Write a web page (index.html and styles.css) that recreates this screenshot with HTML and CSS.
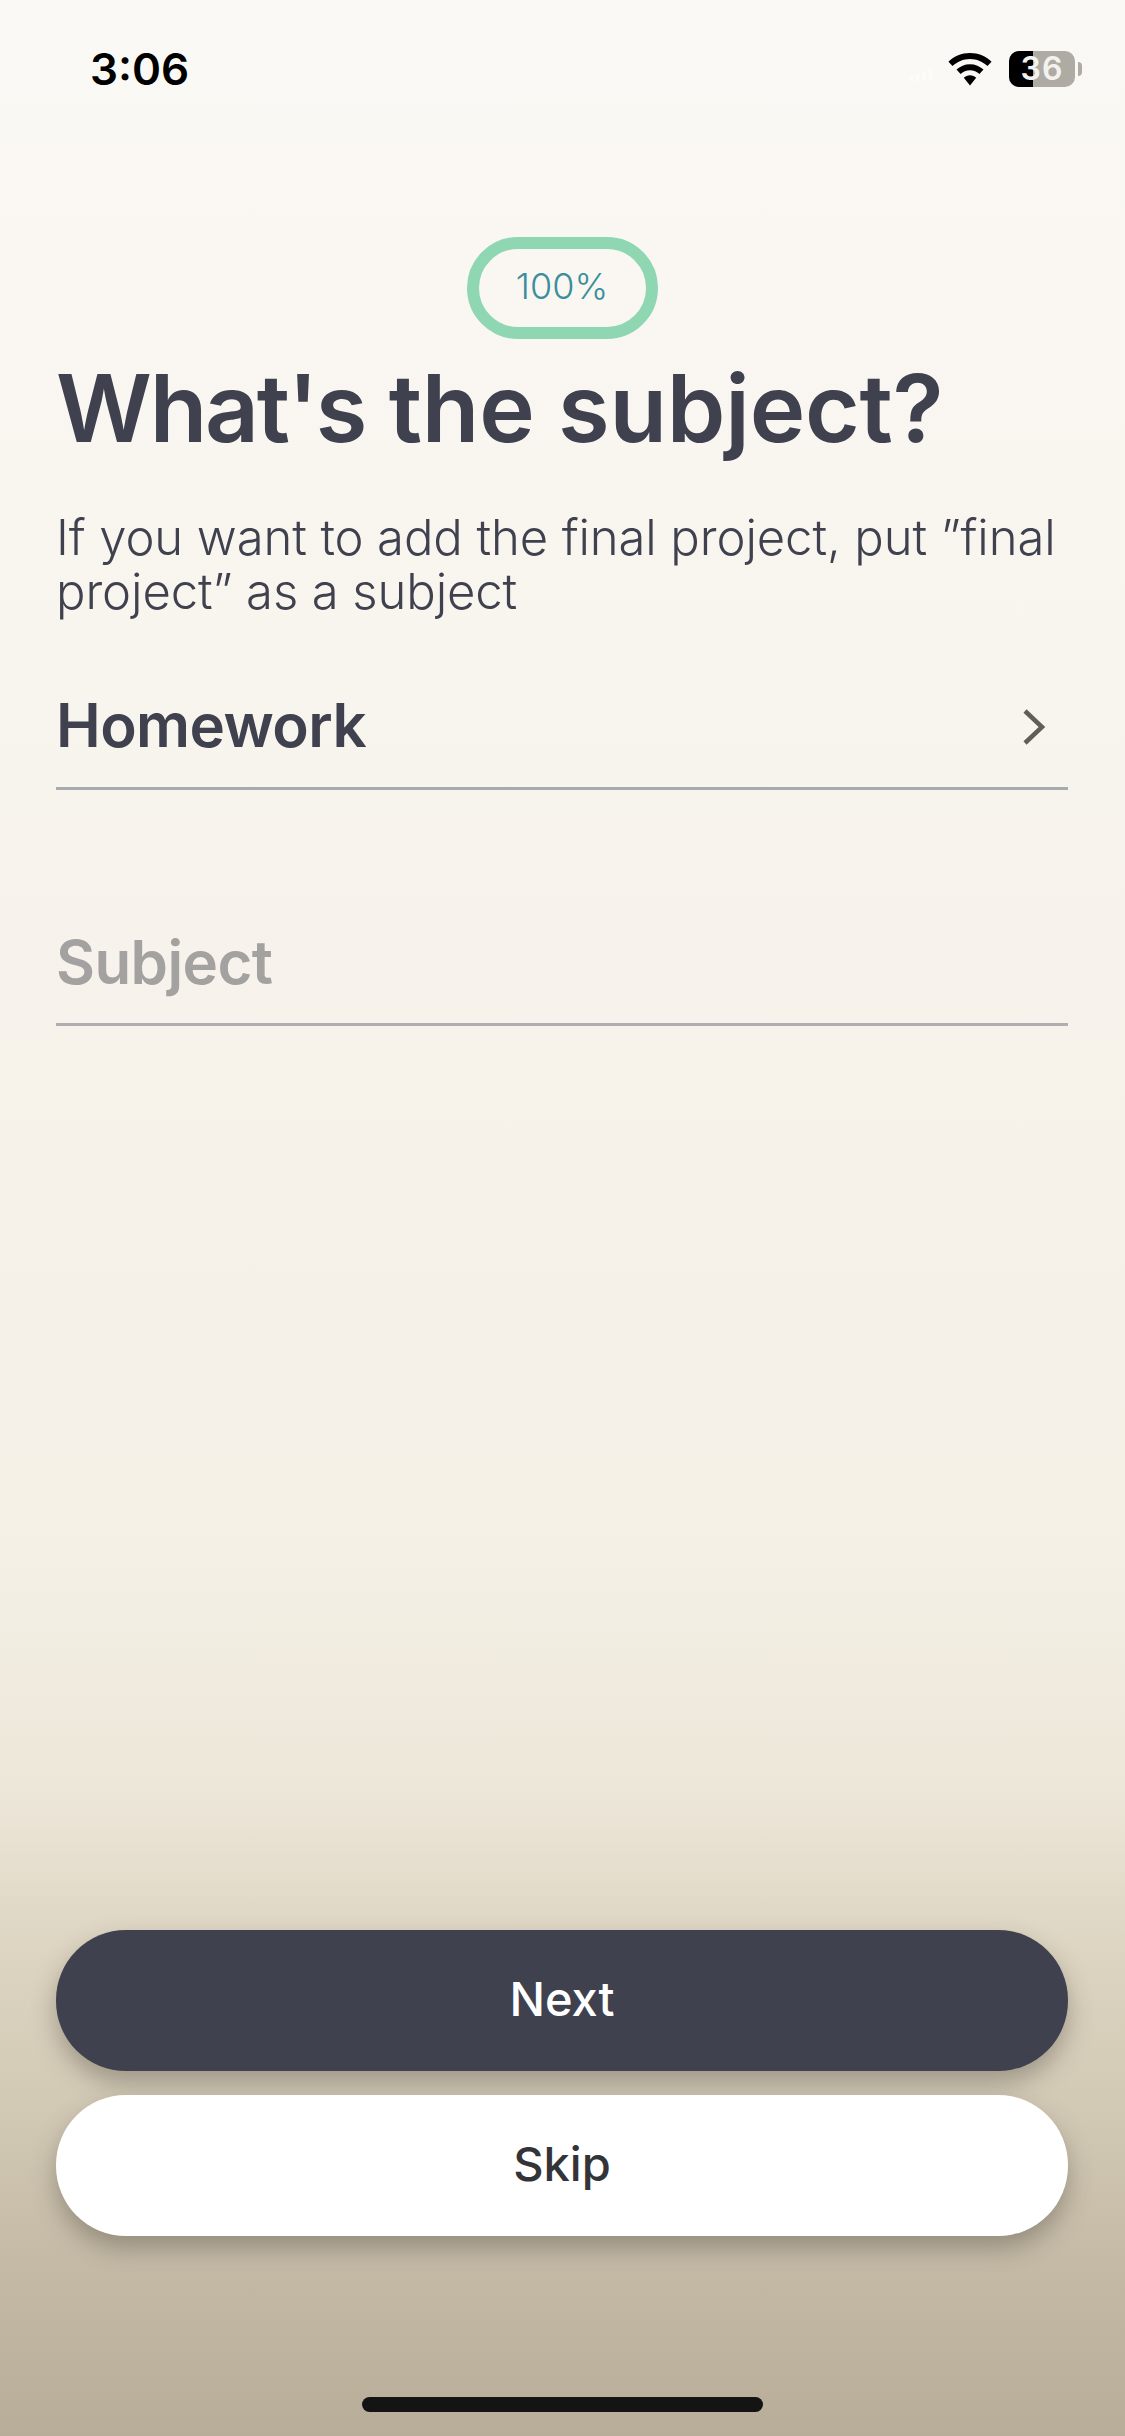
FILE: index.html
```html
<!DOCTYPE html>
<html lang="en">
<head>
  <meta charset="UTF-8">
  <title>What's the subject?</title>
  <link rel="stylesheet" href="styles.css">
</head>
<body>

  <div class="status-bar">
    <span class="time">3:06</span>
    <div class="status-icons">
      <svg class="signal" width="24" height="12" viewBox="0 0 24 12">
        <rect x="0" y="7" width="4" height="5" rx="1"/>
        <rect x="6.500" y="5" width="4" height="7" rx="1"/>
        <rect x="13" y="2.500" width="4" height="9.500" rx="1"/>
        <rect x="19.500" y="0" width="4" height="12" rx="1"/>
      </svg>
      <svg class="wifi" width="46" height="33" viewBox="0 0 46 34">
        <path d="M23 0C14.300 0 6.500 3.400.8 9l4.200 4.500C9.700 9 16 6.200 23 6.200S36.300 9 41 13.500L45.200 9C39.500 3.400 31.700 0 23 0z"/>
        <path d="M23 11.500c-5.400 0-10.300 2.100-13.900 5.600l4.200 4.500c2.500-2.400 5.900-3.900 9.700-3.900s7.200 1.500 9.700 3.900l4.200-4.500C33.300 13.600 28.400 11.500 23 11.500z"/>
        <path d="M23 23c-2.500 0-4.700 1-6.400 2.500L23 33.500l6.400-8C27.700 24 25.500 23 23 23z"/>
      </svg>
      <div class="battery">
        <div class="battery-level"></div>
        <span class="battery-text">36</span>
      </div>
      <div class="battery-cap"></div>
    </div>
  </div>

  <main class="content">
    <div class="progress">100%</div>
    <h1><span class="tight">What's</span> the subject?</h1>
    <p class="hint">If you want to add the final project, put ”final project” as a subject</p>

    <div class="field field-select">
      <span>Homework</span>
      <svg class="chevron" width="24" height="38" viewBox="0 0 24 38">
        <path d="M3 3l17 16L3 35" fill="none" stroke="#5f5e59" stroke-width="4.500"/>
      </svg>
    </div>

    <div class="field field-empty">
      <span>Subject</span>
    </div>
  </main>

  <div class="buttons">
    <button class="btn btn-next">Next</button>
    <button class="btn btn-skip">Skip</button>
  </div>

  <div class="home-bar"></div>

</body>
</html>
```

FILE: styles.css
```css
* {
  box-sizing: border-box;
}

html, body {
  margin: 0;
  height: 2436px;
}

body {
  width: 1125px;
  overflow: hidden;
  display: flex;
  flex-direction: column;
  font-family: Inter, "Liberation Sans", sans-serif;
  color: #40414e;
  background: linear-gradient(to bottom,
    #fbf9f5 0,
    #f7f3ec 900px,
    #f5f0e6 1550px,
    #ece6d8 1800px,
    #dcd3c0 1960px,
    #d3cab6 2100px,
    #c4baa6 2260px,
    #b8ad99 2436px);
}

/* Status bar */
.status-bar {
  display: flex;
  justify-content: space-between;
  align-items: center;
  height: 102px;
  padding: 36px 43px 0 90px;
}

.time {
  font-size: 44px;
  font-weight: 600;
  color: #000;
}

.status-icons {
  display: flex;
  align-items: center;
}

.signal {
  fill: #fff;
  opacity: 0.6;
  margin: 12px 14px 0 0;
}

.wifi {
  margin-right: 16px;
}

.battery {
  position: relative;
  width: 66px;
  height: 36px;
  border-radius: 10px;
  background: #aeaba5;
}

.battery-level {
  width: 24px;
  height: 100%;
  border-radius: 10px 0 0 10px;
  background: #000;
}

.battery-text {
  position: absolute;
  top: 0;
  left: 0;
  right: 0;
  text-align: center;
  font-size: 32px;
  line-height: 36px;
  font-weight: 600;
  letter-spacing: 1px;
  color: #f4f2ee;
}

.battery-cap {
  width: 4px;
  height: 14px;
  margin-left: 3px;
  border-radius: 0 4px 4px 0;
  background: #aeaba5;
}

/* Main content */
.content {
  padding: 135px 57px 0 56px;
}

.progress {
  width: 191px;
  height: 102px;
  margin: 0 auto;
  padding-bottom: 4px;
  border: 12px solid #8fd6b2;
  border-radius: 51px;
  display: flex;
  align-items: center;
  justify-content: center;
  font-size: 36px;
  font-weight: 300;
  color: #3a8f9b;
}

h1 {
  margin: 12px 0 0;
  font-size: 94px;
  line-height: 114px;
  font-weight: 600;
  letter-spacing: -0.2px;
  white-space: nowrap;
}

.tight {
  letter-spacing: -2.2px;
}

.hint {
  margin: 46px 0 0;
  font-size: 49px;
  line-height: 54px;
  font-weight: 300;
  letter-spacing: -0.1px;
}

.field {
  display: flex;
  justify-content: space-between;
  align-items: center;
  font-size: 60px;
  font-weight: 600;
  letter-spacing: -0.6px;
}

.chevron {
  margin-top: 4px;
}

.field-select {
  height: 128px;
  margin-top: 43px;
  padding-right: 22px;
  border-bottom: 3px solid #a8abae;
}

.field-empty {
  height: 128px;
  margin-top: 108px;
  padding-top: 3px;
  color: #a3a2a0;
  border-bottom: 3px solid #b0aeb2;
}

/* Buttons */
.buttons {
  display: flex;
  flex-direction: column;
  gap: 24px;
  margin-top: auto;
  padding: 0 57px 0 56px;
}

.btn {
  height: 141px;
  padding-bottom: 6px;
  border: none;
  border-radius: 70px;
  font-family: inherit;
  font-size: 47px;
  font-weight: 500;
  box-shadow: 0 12px 24px rgba(60, 55, 45, 0.35);
}

.btn-next {
  background: #40414e;
  color: #fff;
}

.btn-skip {
  background: #fff;
  color: #333438;
}

.home-bar {
  width: 401px;
  height: 15px;
  margin: 161px auto 24px;
  border-radius: 8px;
  background: #141414;
}
```
